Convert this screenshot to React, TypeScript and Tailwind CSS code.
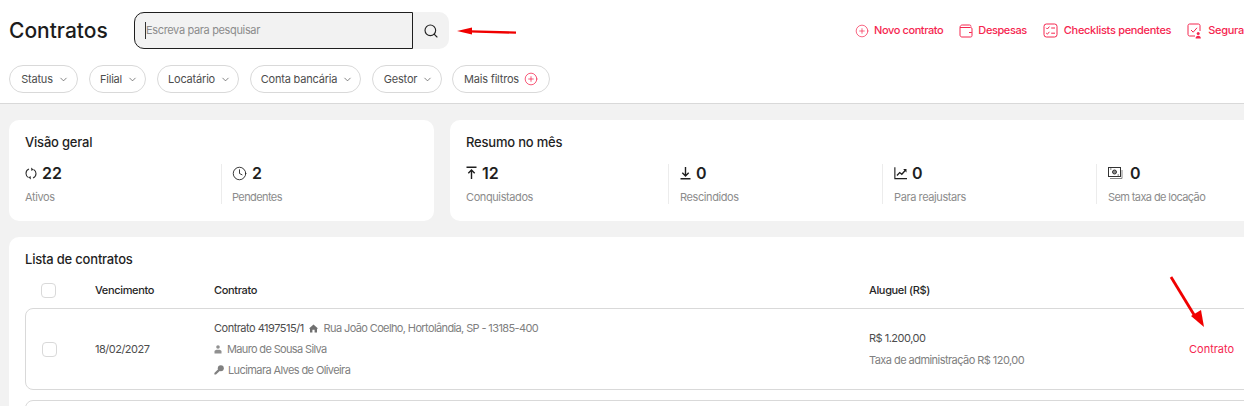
import { Search, ChevronDown, CirclePlus, Clock } from "lucide-react";

const font = { fontFamily: '"Inter", "Noto Sans", sans-serif' };

function Pill({ label, plus, w }: { label: string; plus?: boolean; w: string }) {
  return (
    <div className={`${w} ${plus ? "" : "pl-[3px]"} flex h-[28px] shrink-0 items-center justify-center gap-[5px] rounded-full border border-[#d9d9d9] text-[11px] tracking-[-0.2px] text-[#4d4d4d]`}>
      <span>{label}</span>
      {plus ? <CirclePlus size={14} strokeWidth={1.3} className="text-[#f5264f]" /> : <ChevronDown size={11} strokeWidth={1.5} />}
    </div>
  );
}

function Action({ icon, label, gap, track }: { icon: React.ReactNode; label: string; gap: string; track: string }) {
  return (
    <div className={`${gap} ${track} flex shrink-0 items-center text-[11px] font-medium text-[#f5264f]`}>
      {icon}
      <span>{label}</span>
    </div>
  );
}

function Stat({ icon, value, label, w, last }: { icon: React.ReactNode; value: string; label: string; w: string; last?: boolean }) {
  return (
    <div className={`${w} shrink-0 ${last ? "" : "border-r border-[#ececec]"} flex h-[40px] flex-col justify-between`}>
      <div className="flex h-[18px] items-center gap-[5px] text-[#1f1f1f]">
        {icon}
        <span className="text-[16px] font-semibold leading-none">{value}</span>
      </div>
      <span className={`text-[11px] leading-[14px] ${last ? "tracking-[-0.6px]" : "tracking-[-0.4px]"} text-[#8c8c8c]`}>{label}</span>
    </div>
  );
}

const WalletIcon = () => (
  <svg width="14" height="14" viewBox="0 0 14 14" fill="none" stroke="currentColor" strokeWidth="1">
    <path d="M1 3.5 C1 2 2 1 3.2 1 H10.5 C11.5 1 12 1.6 12 2.6 M1 3.5 V11 C1 12.2 1.8 13 3 13 H11.5 C12.5 13 13 12.4 13 11.5 V4.8 C13 4 12.5 3.5 11.6 3.5 H1 Z" />
    <path d="M10 8.5 H12.8" />
  </svg>
);

const ChecklistIcon = () => (
  <svg width="15" height="15" viewBox="0 0 15 15" fill="none" stroke="currentColor" strokeWidth="1">
    <rect x="1" y="1" width="13" height="13" rx="2.4" />
    <path d="M3.2 4.8 L4.4 6 L6.4 3.6 M3.2 10 L4.4 11.2 L6.4 8.8 M8.2 5 H12 M8.2 10.2 H12" />
  </svg>
);

const SeguraIcon = () => (
  <svg width="15" height="16" viewBox="0 0 15 16" fill="none" stroke="currentColor" strokeWidth="1">
    <path d="M8 13 H2.6 C1.7 13 1 12.3 1 11.4 V2.6 C1 1.7 1.7 1 2.6 1 H11.4 C12.3 1 13 1.7 13 2.6 V8" />
    <path d="M4 7 L6.2 9.2 L10 4.8" />
    <circle cx="11.2" cy="10.6" r="1.5" fill="currentColor" stroke="none" />
    <path d="M8.6 15.4 C8.6 13.6 9.6 12.8 11.2 12.8 C12.8 12.8 13.8 13.6 13.8 15.4 Z" fill="currentColor" stroke="none" />
  </svg>
);

const RotateIcon = () => (
  <svg width="12" height="15" viewBox="0 0 12 14" fill="none" stroke="#333" strokeWidth="1.1">
    <path d="M4 2.6 C2 3.3 1 5 1 7 C1 8.8 2 10.2 3.4 11" />
    <path d="M8 11.4 C10 10.7 11 9 11 7 C11 5.2 10 3.8 8.6 3" />
    <path d="M6 1 L8.6 3 L6.4 4.6 Z" fill="#333" stroke="none" />
    <path d="M6 13 L3.4 11 L5.6 9.4 Z" fill="#333" stroke="none" />
  </svg>
);

const UpIcon = () => (
  <svg width="11" height="14" viewBox="0 0 11 14" fill="none" stroke="#1f1f1f" strokeWidth="1.4">
    <path d="M0.5 1.2 H10.5 M5.5 13 V4 M2.3 7.2 L5.5 4 L8.7 7.2" />
  </svg>
);

const DownIcon = () => (
  <svg width="11" height="14" viewBox="0 0 11 14" fill="none" stroke="#1f1f1f" strokeWidth="1.4">
    <path d="M0.5 12.8 H10.5 M5.5 1 V10 M2.3 6.8 L5.5 10 L8.7 6.8" />
  </svg>
);

const ChartIcon = () => (
  <svg width="13" height="14" viewBox="0 0 15 15" fill="none" stroke="#1f1f1f" strokeWidth="1.3">
    <path d="M1 1 V14 H15" />
    <path d="M3.4 10.4 L6.6 7 L9 9 L13.4 4" strokeWidth="1.5" />
    <path d="M10.6 3 H14.4 V6.8 Z" fill="#1f1f1f" stroke="none" />
  </svg>
);

const MoneyIcon = () => (
  <svg width="15" height="13" viewBox="0 0 15 13" fill="none" stroke="#333" strokeWidth="1">
    <rect x="0.5" y="0.5" width="12" height="9" />
    <circle cx="6.5" cy="5" r="2" fill="#888" stroke="#333" />
    <path d="M2.2 2 H3.4 M9.6 8 H10.8" />
    <path d="M14 3 V11.5 H2" stroke="#888" />
  </svg>
);

const HouseIcon = () => (
  <svg width="9" height="9" viewBox="0 0 9 9" fill="#707070">
    <path d="M4.5 0.6 L9 4.4 L8 4.8 V8.4 H5.6 V5.8 H3.4 V8.4 H1 V4.8 L0 4.4 Z" />
  </svg>
);

const PersonIcon = () => (
  <svg width="8" height="9" viewBox="0 0 8 9" fill="#909090">
    <circle cx="4" cy="2" r="1.8" />
    <path d="M0.5 8.6 V6.6 C0.5 5.4 1.6 4.8 4 4.8 C6.4 4.8 7.5 5.4 7.5 6.6 V8.6 Z" />
  </svg>
);

const KeyIcon = () => (
  <svg width="10" height="10" viewBox="0 0 10 10" fill="#808080">
    <circle cx="6.8" cy="3.2" r="3" />
    <path d="M4.6 3.8 L6.2 5.4 L2 9.6 H0.4 V8 Z" />
  </svg>
);

const headCols = "grid grid-cols-[54px_119px_655px_320px_1fr] items-center pl-[16px]";
const rowCols = "grid grid-cols-[53px_119px_655px_320px_1fr] items-center pl-[16px]";

export default function App() {
  return (
    <div style={font} className="relative h-[406px] w-[1244px] overflow-hidden bg-[#f2f2f2]">
      <header className="h-[104px] overflow-hidden border-b border-[#d9d9d9] bg-white pl-[9px]">
        <div className="flex h-[61px] items-center">
          <h1 className="mt-[1px] w-[125px] shrink-0 text-[21px] font-medium text-[#1c1c1c]">Contratos</h1>
          <div className="flex h-[37px] w-[315px] shrink-0 rounded-[10px] bg-[#f2f2f2]">
            <div className="flex w-[279px] items-center rounded-l-[10px] border border-[#1f1f1f] pl-[10px] text-[11px] tracking-[-0.35px] text-[#8c8c8c]">
              <span className="border-l border-[#333]">Escreva para pesquisar</span>
            </div>
            <div className="flex flex-1 items-center justify-center text-[#222]">
              <Search size={16} strokeWidth={1.7} />
            </div>
          </div>
          <div className="ml-[406px] flex shrink-0 items-center gap-[16px]">
            <Action track="tracking-[-0.4px]" gap="gap-[5px]" icon={<CirclePlus size={14} strokeWidth={1.2} />} label="Novo contrato" />
            <Action track="tracking-[-0.4px]" gap="gap-[5px]" icon={<WalletIcon />} label="Despesas" />
            <Action track="tracking-[-0.3px]" gap="gap-[6px]" icon={<ChecklistIcon />} label="Checklists pendentes" />
            <Action track="tracking-[-0.3px]" gap="gap-[6px]" icon={<SeguraIcon />} label="Segura" />
          </div>
        </div>
        <div className="mt-[4px] flex gap-[11px]">
          <Pill w="w-[69px]" label="Status" />
          <Pill w="w-[57px]" label="Filial" />
          <Pill w="w-[82px]" label="Locatário" />
          <Pill w="w-[111px]" label="Conta bancária" />
          <Pill w="w-[70px]" label="Gestor" />
          <div className="-ml-[1px]">
            <Pill w="w-[98px]" label="Mais filtros" plus />
          </div>
        </div>
      </header>

      <main className="px-[9px] pt-[16px]">
        <div className="flex gap-[16px]">
          <section className="h-[101px] w-[425px] shrink-0 rounded-[10px] bg-white px-[16px] pt-[14px]">
            <h2 className="text-[13px] leading-[17px] font-[450] tracking-[-0.2px] text-[#1f1f1f]">Visão geral</h2>
            <div className="mt-[13px] flex gap-[10px]">
              <Stat w="w-[197px]" icon={<RotateIcon />} value="22" label="Ativos" />
              <Stat w="w-[190px]" last icon={<Clock size={15} strokeWidth={1.4} />} value="2" label="Pendentes" />
            </div>
          </section>
          <section className="h-[101px] w-[820px] shrink-0 rounded-[10px] bg-white px-[16px] pt-[14px]">
            <h2 className="text-[13px] leading-[17px] font-[450] tracking-[-0.2px] text-[#1f1f1f]">Resumo no mês</h2>
            <div className="mt-[13px] flex gap-[11px]">
              <Stat w="w-[203px]" icon={<UpIcon />} value="12" label="Conquistados" />
              <Stat w="w-[203px]" icon={<DownIcon />} value="0" label="Rescindidos" />
              <Stat w="w-[203px]" icon={<ChartIcon />} value="0" label="Para reajustars" />
              <Stat w="w-[150px]" last icon={<span className="mr-[2px] inline-flex"><MoneyIcon /></span>} value="0" label="Sem taxa de locação" />
            </div>
          </section>
        </div>

        <section className="mt-[16px] w-[1300px] rounded-[10px] bg-white px-[16px] pt-[14px]">
          <h2 className="text-[13px] leading-[17px] font-[450] tracking-[-0.2px] text-[#1f1f1f]">Lista de contratos</h2>
          <div className={`${headCols} mt-[7px] h-[30px] text-[11px] font-medium tracking-[-0.35px] text-[#262626]`}>
            <div className="size-[15px] rounded-[4px] border border-[#d9d9d9]" />
            <span>Vencimento</span>
            <span>Contrato</span>
            <span>Aluguel (R$)</span>
          </div>
          <div className={`${rowCols} mt-[3px] h-[82px] rounded-[8px] border border-[#d9d9d9] text-[11px] tracking-[-0.5px] text-[#4d4d4d]`}>
            <div className="size-[15px] rounded-[4px] border border-[#d9d9d9]" />
            <span>18/02/2027</span>
            <div className="flex flex-col gap-[7px] leading-[14px]">
              <div className="flex items-center">
                <span>Contrato 4197515/1</span>
                <span className="mr-[6px] ml-[5px] inline-flex"><HouseIcon /></span>
                <span className="tracking-[-0.62px] text-[#808080]">Rua João Coelho, Hortolândia, SP - 13185-400</span>
              </div>
              <div className="flex items-center gap-[5px] tracking-[-0.65px] text-[#808080]">
                <PersonIcon />
                <span>Mauro de Sousa Silva</span>
              </div>
              <div className="flex items-center gap-[4px] tracking-[-0.6px] text-[#808080]">
                <KeyIcon />
                <span>Lucimara Alves de Oliveira</span>
              </div>
            </div>
            <div className="flex flex-col gap-[8px] leading-[14px]">
              <span>R$ 1.200,00</span>
              <span className="tracking-[-0.55px] text-[#808080]">Taxa de administração R$ 120,00</span>
            </div>
            <span className="tracking-[0px] text-[#f5264f]">Contrato</span>
          </div>
          <div className="mt-[10px] h-[82px] rounded-[8px] border border-[#d9d9d9]" />
        </section>
      </main>

      <svg className="absolute top-[25px] left-[456px]" width="62" height="14" viewBox="0 0 62 14">
        <path d="M60 7.6 L14 6.4" stroke="#f00000" strokeWidth="2.4" fill="none" />
        <path d="M1 6 L16 2.5 L16 9.5 Z" fill="#f00000" />
      </svg>
      <svg className="absolute top-[274px] left-[1168px]" width="40" height="56" viewBox="0 0 40 56">
        <path d="M3 3 L28 44" stroke="#f00000" strokeWidth="2.8" fill="none" />
        <path d="M36 53 L23 42 L33 36 Z" fill="#f00000" />
      </svg>
    </div>
  );
}
